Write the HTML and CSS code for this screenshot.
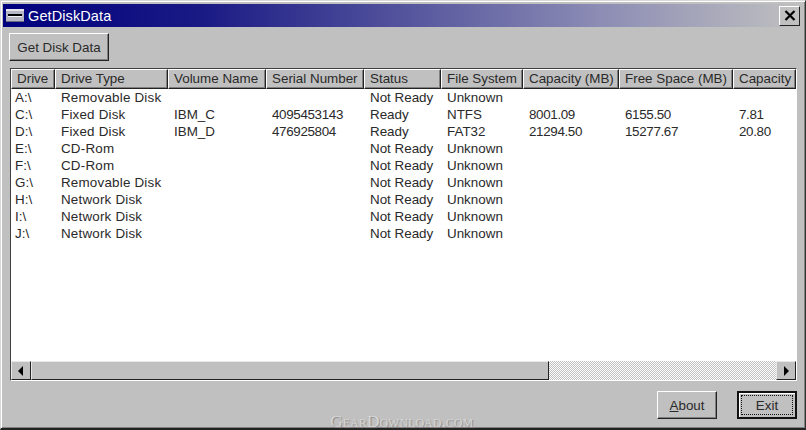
FILE: index.html
```html
<!DOCTYPE html>
<html lang="en">
<head>
<meta charset="utf-8">
<title>GetDiskData</title>
<link rel="stylesheet" href="styles.css">
</head>
<body>
<div class="window">
  <div class="titlebar">
    <svg class="appicon" width="18" height="13" viewBox="0 0 18 13">
      <rect x="0" y="0" width="18" height="13" fill="#b8b8c4"/>
      <rect x="0" y="0" width="18" height="2" fill="#e4e4ea"/>
      <rect x="0" y="12" width="18" height="1" fill="#6a6a80"/>
      <rect x="2" y="5" width="14" height="2" fill="#000"/>
      <rect x="2" y="7" width="14" height="1" fill="#f4f4f4"/>
    </svg>
    <span class="title">GetDiskData</span>
    <button class="close" type="button">
      <svg width="12" height="11" viewBox="0 0 12 11"><path d="M1.5 1l9 9M10.5 1l-9 9" stroke="#000" stroke-width="2.2" fill="none"/></svg>
    </button>
  </div>
  <div class="body">
    <div class="toolbar"><button class="btn getbtn" type="button">Get Disk Data</button></div>
    <div class="list">
      <div class="row head">
        <div class="c1">Drive</div><div class="c2">Drive Type</div><div class="c3">Volume Name</div><div class="c4">Serial Number</div><div class="c5">Status</div><div class="c6">File System</div><div class="c7">Capacity (MB)</div><div class="c8">Free Space (MB)</div><div class="c9">Capacity</div>
      </div>
      <div class="rows">
        <div class="row"><div class="c1">A:\</div><div class="c2">Removable Disk</div><div class="c3"></div><div class="c4"></div><div class="c5">Not Ready</div><div class="c6">Unknown</div></div>
        <div class="row"><div class="c1">C:\</div><div class="c2">Fixed Disk</div><div class="c3">IBM_C</div><div class="c4">4095453143</div><div class="c5">Ready</div><div class="c6">NTFS</div><div class="c7">8001.09</div><div class="c8">6155.50</div><div class="c9">7.81</div></div>
        <div class="row"><div class="c1">D:\</div><div class="c2">Fixed Disk</div><div class="c3">IBM_D</div><div class="c4">476925804</div><div class="c5">Ready</div><div class="c6">FAT32</div><div class="c7">21294.50</div><div class="c8">15277.67</div><div class="c9">20.80</div></div>
        <div class="row"><div class="c1">E:\</div><div class="c2">CD-Rom</div><div class="c3"></div><div class="c4"></div><div class="c5">Not Ready</div><div class="c6">Unknown</div></div>
        <div class="row"><div class="c1">F:\</div><div class="c2">CD-Rom</div><div class="c3"></div><div class="c4"></div><div class="c5">Not Ready</div><div class="c6">Unknown</div></div>
        <div class="row"><div class="c1">G:\</div><div class="c2">Removable Disk</div><div class="c3"></div><div class="c4"></div><div class="c5">Not Ready</div><div class="c6">Unknown</div></div>
        <div class="row"><div class="c1">H:\</div><div class="c2">Network Disk</div><div class="c3"></div><div class="c4"></div><div class="c5">Not Ready</div><div class="c6">Unknown</div></div>
        <div class="row"><div class="c1">I:\</div><div class="c2">Network Disk</div><div class="c3"></div><div class="c4"></div><div class="c5">Not Ready</div><div class="c6">Unknown</div></div>
        <div class="row"><div class="c1">J:\</div><div class="c2">Network Disk</div><div class="c3"></div><div class="c4"></div><div class="c5">Not Ready</div><div class="c6">Unknown</div></div>
      </div>
      <div class="hscroll">
        <div class="sbtn"><svg width="6" height="10" viewBox="0 0 6 10"><path d="M5 0v10L0 5z" fill="#000"/></svg></div>
        <div class="thumb"></div>
        <div class="track"></div>
        <div class="sbtn"><svg width="6" height="10" viewBox="0 0 6 10"><path d="M1 0v10l5-5z" fill="#000"/></svg></div>
      </div>
    </div>
    <div class="actions">
      <button class="btn about" type="button"><span><u>A</u>bout</span></button>
      <button class="btn exit" type="button"><span class="focus">Exit</span></button>
    </div>
  </div>
  <div class="watermark">GearDownload.com</div>
</div>
</body>
</html>
```
FILE: styles.css
```css
* { box-sizing: border-box; }
html, body { margin: 0; padding: 0; }
body {
  width: 806px;
  height: 430px;
  overflow: hidden;
  background: #c0c0c0;
  font-family: "Liberation Sans", Arial, sans-serif;
  font-size: 13.4px;
  color: #2a2a2a;
}
.window {
  position: relative;
  width: 806px;
  height: 430px;
  padding: 3px 3px 0 3px;
  background: #c0c0c0;
  border-top: 1px solid #d8d8d8;
  border-left: 1px solid #d8d8d8;
  border-right: 1px solid #333;
  border-bottom: 2px solid #222;
  box-shadow: inset 1px 1px 0 #fff, inset -1px -1px 0 #808080;
  display: flex;
  flex-direction: column;
}
.titlebar {
  height: 23px;
  flex: none;
  display: flex;
  align-items: center;
  padding: 0 2px 0 3px;
  background: linear-gradient(90deg, #00007f 0%, #1a1a85 25%, #8d8db5 75%, #c0c0c0 100%);
  margin-left: -1px;
}
.appicon { flex: none; margin-right: 4px; }
.title {
  flex: 1;
  color: #fff;
  font-size: 14.5px;
  letter-spacing: 0.1px;
}
.close {
  width: 21px;
  height: 20px;
  padding: 0;
  display: flex;
  align-items: center;
  justify-content: center;
  background: #c0c0c0;
  border: 1px solid;
  border-color: #fff #222 #222 #fff;
}
.body {
  flex: 1;
  display: flex;
  flex-direction: column;
  padding: 6px 5px 0 5px;
}
.btn {
  font: inherit;
  color: #2a2a2a;
  background: #c0c0c0;
  padding: 0;
  border: 1px solid;
  border-color: #fff #222 #222 #fff;
  box-shadow: inset -1px -1px 0 #808080;
}
.toolbar { height: 28px; flex: none; }
.getbtn { width: 100px; height: 28px; }
.list {
  margin-top: 7px;
  margin-left: 1px;
  height: 313px;
  flex: none;
  width: 787px;
  border: 1px solid;
  border-color: #404040 #fff #fff #404040;
  display: flex;
  flex-direction: column;
  background: #fff;
}
.row { display: flex; height: 17px; line-height: 17px; white-space: nowrap; }
.rows { flex: 1; overflow: hidden; }
.row > div { flex: none; padding-left: 6px; overflow: hidden; }
.rows .c1 { padding-left: 4px; }
.rows .c2 { letter-spacing: 0.2px; }
.rows .c4, .rows .c7, .rows .c8, .rows .c9 { letter-spacing: -0.35px; }
.head { height: 20px; line-height: 18px; background: #c0c0c0; flex: none; }
.head > div {
  padding-left: 5px;
  border: 1px solid;
  border-color: #fff #222 #222 #fff;
  box-shadow: inset -1px -1px 0 #808080;
}
.c1 { width: 44px; }
.c2 { width: 113px; }
.c3 { width: 98px; }
.c4 { width: 98px; }
.c5 { width: 77px; }
.c6 { width: 82px; }
.c7 { width: 96px; }
.c8 { width: 114px; }
.c9 { width: 63px; }
.hscroll { height: 19px; display: flex; flex: none; background: #c0c0c0; }
.sbtn {
  width: 20px;
  flex: none;
  display: flex;
  align-items: center;
  justify-content: center;
  background: #c0c0c0;
  border: 1px solid;
  border-color: #e8e8e8 #222 #222 #e8e8e8;
}
.thumb {
  width: 518px;
  flex: none;
  background: #c0c0c0;
  border: 1px solid;
  border-color: #e8e8e8 #222 #222 #e8e8e8;
}
.track {
  flex: 1;
  background-color: #fff;
  background-image: conic-gradient(#c0c0c0 25%, #fff 0 50%, #c0c0c0 0 75%, #fff 0);
  background-size: 2px 2px;
}
.actions {
  margin-top: 10px;
  display: flex;
  justify-content: flex-end;
  gap: 20px;
}
.about, .exit { width: 60px; height: 28px; }
.exit {
  border: 2px solid #111;
  padding: 2px;
  box-shadow: inset 1px 1px 0 #fff;
}
.focus {
  display: flex;
  align-items: center;
  justify-content: center;
  height: 100%;
  border: 1px dotted #111;
}
.watermark {
  position: absolute;
  left: 329px;
  bottom: 0;
  font-family: "Liberation Serif", serif;
  font-variant: small-caps;
  font-size: 17.6px;
  line-height: 13px;
  color: #d6d6d6;
  text-shadow: 1px 1px 1px #888;
}
```
